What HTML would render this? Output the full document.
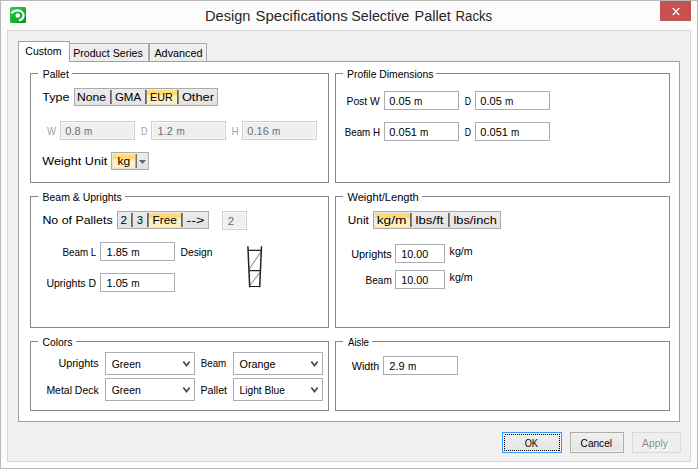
<!DOCTYPE html>
<html><head><meta charset="utf-8"><title>Design Specifications Selective Pallet Racks</title>
<style>html,body{margin:0;padding:0;background:#fcfcfc;}body{width:698px;height:469px;overflow:hidden;}svg{display:block;font-family:"Liberation Sans", sans-serif;}rect,line{shape-rendering:crispEdges;}</style></head><body>
<svg width="698" height="469" viewBox="0 0 698 469">
<defs>
<linearGradient id="gIcon" x1="0" y1="0" x2="1" y2="1"><stop offset="0" stop-color="#2ad24c"/><stop offset="1" stop-color="#07921f"/></linearGradient>
<linearGradient id="gBtn" x1="0" y1="0" x2="0" y2="1"><stop offset="0" stop-color="#f0f0f0"/><stop offset="1" stop-color="#e4e4e4"/></linearGradient>
<linearGradient id="gGrp" x1="0" y1="0" x2="0" y2="1"><stop offset="0" stop-color="#ececec"/><stop offset="1" stop-color="#e2e2e2"/></linearGradient>
<linearGradient id="gSel" x1="0" y1="0" x2="0" y2="1"><stop offset="0" stop-color="#ffe394"/><stop offset="0.12" stop-color="#ffdb72"/><stop offset="0.30" stop-color="#ffd660"/><stop offset="0.38" stop-color="#ffe9a6"/><stop offset="0.62" stop-color="#fff2c8"/><stop offset="1" stop-color="#ffedb2"/></linearGradient>
</defs>
<rect x="0" y="0" width="698" height="469" fill="#fcfcfc" />
<rect x="0.5" y="0.5" width="697" height="468" fill="none" stroke="#bababa" />
<rect x="7.5" y="30.5" width="683" height="431" fill="#f0f0f0" stroke="#d6d6d6" />
<rect x="10" y="7" width="16" height="16" rx="1.5" fill="url(#gIcon)" style="shape-rendering:auto"/>
<path d="M12,12.5 C14,10.8 16,10.3 18.2,10.4 C21.5,10.7 23.7,13 23.5,15.8 C23.3,18.4 21.5,19.6 19.6,20.2" fill="none" stroke="#fff" stroke-width="2.2" stroke-linecap="round"/>
<circle cx="17.8" cy="15.5" r="2.3" fill="#fff"/>
<text x="205.10000000000002" y="20.7" font-size="15" fill="#262626" textLength="45.3" lengthAdjust="spacingAndGlyphs" >Design</text>
<text x="255.60000000000002" y="20.7" font-size="15" fill="#262626" textLength="92.1" lengthAdjust="spacingAndGlyphs" >Specifications</text>
<text x="351.2" y="20.7" font-size="15" fill="#262626" textLength="58.1" lengthAdjust="spacingAndGlyphs" >Selective</text>
<text x="414.6" y="20.7" font-size="15" fill="#262626" textLength="36.2" lengthAdjust="spacingAndGlyphs" >Pallet</text>
<text x="455.6" y="20.7" font-size="15" fill="#262626" textLength="36.5" lengthAdjust="spacingAndGlyphs" >Racks</text>
<rect x="660" y="1" width="31" height="20" fill="#c75050" />
<path d="M672,8 L673.8,8 L680,15 L678.2,15 Z" fill="#fff"/><path d="M680,8 L678.2,8 L672,15 L673.8,15 Z" fill="#fff"/>
<rect x="69.5" y="43.5" width="79" height="18" fill="#f5f5f5" stroke="#a6a6a6" />
<rect x="71" y="45" width="76" height="16" fill="#ededed" />
<rect x="149.5" y="43.5" width="57" height="18" fill="#f5f5f5" stroke="#a6a6a6" />
<rect x="151" y="45" width="54" height="16" fill="#ededed" />
<rect x="18.5" y="61.5" width="661" height="360" fill="#fff" stroke="#a0a0a0" />
<rect x="18.5" y="41.5" width="51" height="20" fill="#fff" stroke="#a0a0a0" />
<rect x="19" y="61" width="50" height="1" fill="#fff" />
<text x="25.3" y="55" font-size="11.5" fill="#000" textLength="36.2" lengthAdjust="spacingAndGlyphs" >Custom</text>
<text x="73.2" y="57" font-size="11.5" fill="#000" textLength="69.6" lengthAdjust="spacingAndGlyphs" >Product Series</text>
<text x="154.4" y="57" font-size="11.5" fill="#000" textLength="48.2" lengthAdjust="spacingAndGlyphs" >Advanced</text>
<rect x="30.5" y="73.5" width="298" height="109" fill="none" stroke="#85878f" />
<rect x="38" y="73" width="34" height="1" fill="#fff" />
<text x="42.8" y="78" font-size="11.5" fill="#000" textLength="26.0" lengthAdjust="spacingAndGlyphs" >Pallet</text>
<rect x="335.5" y="73.5" width="334" height="109" fill="none" stroke="#85878f" />
<rect x="343" y="73" width="93" height="1" fill="#fff" />
<text x="347" y="78" font-size="11.5" fill="#000" textLength="86.5" lengthAdjust="spacingAndGlyphs" >Profile Dimensions</text>
<rect x="30.5" y="196.5" width="298" height="131" fill="none" stroke="#85878f" />
<rect x="38" y="196" width="87" height="1" fill="#fff" />
<text x="42.5" y="201" font-size="11.5" fill="#000" textLength="79.25" lengthAdjust="spacingAndGlyphs" >Beam &amp; Uprights</text>
<rect x="335.5" y="196.5" width="334" height="131" fill="none" stroke="#85878f" />
<rect x="343" y="196" width="79" height="1" fill="#fff" />
<text x="347.4" y="201" font-size="11.5" fill="#000" textLength="71.4" lengthAdjust="spacingAndGlyphs" >Weight/Length</text>
<rect x="30.5" y="341.5" width="298" height="69" fill="none" stroke="#85878f" />
<rect x="38" y="341" width="38" height="1" fill="#fff" />
<text x="42.5" y="346" font-size="11.5" fill="#000" textLength="30.0" lengthAdjust="spacingAndGlyphs" >Colors</text>
<rect x="335.5" y="341.5" width="334" height="69" fill="none" stroke="#85878f" />
<rect x="343" y="341" width="29" height="1" fill="#fff" />
<text x="348" y="346" font-size="11.5" fill="#000" textLength="21" lengthAdjust="spacingAndGlyphs" >Aisle</text>
<text x="42.3" y="101" font-size="11.7" fill="#000" textLength="27.2" lengthAdjust="spacingAndGlyphs" >Type</text>
<rect x="74.5" y="88.5" width="143" height="17" fill="url(#gGrp)" stroke="#ababab" />
<rect x="147" y="90" width="30" height="14" fill="url(#gSel)" />
<rect x="110" y="90" width="1.75" height="14" fill="#666" style="shape-rendering:auto"/>
<rect x="145" y="90" width="1.75" height="14" fill="#666" style="shape-rendering:auto"/>
<rect x="177" y="90" width="1.75" height="14" fill="#666" style="shape-rendering:auto"/>
<text x="77.1" y="101" font-size="11.7" fill="#000" textLength="29.0" lengthAdjust="spacingAndGlyphs" >None</text>
<text x="114.9" y="101" font-size="11.7" fill="#000" textLength="26.2" lengthAdjust="spacingAndGlyphs" >GMA</text>
<text x="150.1" y="101" font-size="11.7" fill="#000" textLength="22.8" lengthAdjust="spacingAndGlyphs" >EUR</text>
<text x="181.9" y="101" font-size="11.7" fill="#000" textLength="32.1" lengthAdjust="spacingAndGlyphs" >Other</text>
<text x="47" y="135" font-size="11.5" fill="#a3a3ad" textLength="9" lengthAdjust="spacingAndGlyphs" >W</text>
<rect x="60.5" y="121.5" width="74" height="18" fill="#f8f8f8" stroke="#cfcfcf" />
<rect x="62" y="123" width="71" height="15" fill="#efefef" />
<text x="65.3" y="135" font-size="11.5" fill="#6d6d6d" textLength="15.38" lengthAdjust="spacingAndGlyphs" >0.8</text>
<text x="84.1" y="135" font-size="11.5" fill="#6d6d6d" textLength="8.3" lengthAdjust="spacingAndGlyphs" >m</text>
<text x="141" y="135" font-size="11.5" fill="#a3a3ad" textLength="6.5" lengthAdjust="spacingAndGlyphs" >D</text>
<rect x="151.5" y="121.5" width="74" height="18" fill="#f8f8f8" stroke="#cfcfcf" />
<rect x="153" y="123" width="71" height="15" fill="#efefef" />
<text x="157.60000000000002" y="135" font-size="11.5" fill="#6d6d6d" textLength="15.38" lengthAdjust="spacingAndGlyphs" >1.2</text>
<text x="176.4" y="135" font-size="11.5" fill="#6d6d6d" textLength="8.3" lengthAdjust="spacingAndGlyphs" >m</text>
<text x="231.5" y="135" font-size="11.5" fill="#a3a3ad" textLength="7.1" lengthAdjust="spacingAndGlyphs" >H</text>
<rect x="242.5" y="121.5" width="74" height="18" fill="#f8f8f8" stroke="#cfcfcf" />
<rect x="244" y="123" width="71" height="15" fill="#efefef" />
<text x="247.3" y="135" font-size="11.5" fill="#6d6d6d" textLength="21.52" lengthAdjust="spacingAndGlyphs" >0.16</text>
<text x="272.1" y="135" font-size="11.5" fill="#6d6d6d" textLength="8.3" lengthAdjust="spacingAndGlyphs" >m</text>
<text x="42.3" y="165" font-size="11.7" fill="#000" textLength="64.9" lengthAdjust="spacingAndGlyphs" >Weight Unit</text>
<rect x="111.5" y="152.5" width="37" height="17" fill="url(#gGrp)" stroke="#ababab" />
<rect x="113" y="154" width="22" height="14" fill="url(#gSel)" />
<rect x="135.5" y="154" width="1.5" height="14" fill="#6e6e6e" style="shape-rendering:auto"/>
<path d="M139,160 L146,160 L142.5,164 Z" fill="#666"/>
<text x="117.6" y="165" font-size="11.7" fill="#000" textLength="12.7" lengthAdjust="spacingAndGlyphs" >kg</text>
<text x="346.5" y="105" font-size="11.5" fill="#000" textLength="33.25" lengthAdjust="spacingAndGlyphs" >Post W</text>
<rect x="384.5" y="91.5" width="74" height="18" fill="#fff" stroke="#abadb3" />
<text x="389.3" y="105" font-size="11.5" fill="#000" textLength="21.52" lengthAdjust="spacingAndGlyphs" >0.05</text>
<text x="414.1" y="105" font-size="11.5" fill="#000" textLength="8.3" lengthAdjust="spacingAndGlyphs" >m</text>
<text x="464.7" y="105" font-size="11.5" fill="#000" textLength="6.3" lengthAdjust="spacingAndGlyphs" >D</text>
<rect x="475.5" y="91.5" width="74" height="18" fill="#fff" stroke="#abadb3" />
<text x="480.3" y="105" font-size="11.5" fill="#000" textLength="21.52" lengthAdjust="spacingAndGlyphs" >0.05</text>
<text x="505.1" y="105" font-size="11.5" fill="#000" textLength="8.3" lengthAdjust="spacingAndGlyphs" >m</text>
<text x="344.75" y="136" font-size="11.5" fill="#000" textLength="35.25" lengthAdjust="spacingAndGlyphs" >Beam H</text>
<rect x="384.5" y="122.5" width="74" height="18" fill="#fff" stroke="#abadb3" />
<text x="389.3" y="136" font-size="11.5" fill="#000" textLength="27.68" lengthAdjust="spacingAndGlyphs" >0.051</text>
<text x="420.1" y="136" font-size="11.5" fill="#000" textLength="8.3" lengthAdjust="spacingAndGlyphs" >m</text>
<text x="464.7" y="136" font-size="11.5" fill="#000" textLength="6.3" lengthAdjust="spacingAndGlyphs" >D</text>
<rect x="475.5" y="122.5" width="74" height="18" fill="#fff" stroke="#abadb3" />
<text x="480.3" y="136" font-size="11.5" fill="#000" textLength="27.68" lengthAdjust="spacingAndGlyphs" >0.051</text>
<text x="511.1" y="136" font-size="11.5" fill="#000" textLength="8.3" lengthAdjust="spacingAndGlyphs" >m</text>
<text x="42.4" y="224" font-size="11.7" fill="#000" textLength="70.2" lengthAdjust="spacingAndGlyphs" >No of Pallets</text>
<rect x="117.5" y="211.5" width="91" height="17" fill="url(#gGrp)" stroke="#ababab" />
<rect x="149" y="213" width="32" height="14" fill="url(#gSel)" />
<rect x="131" y="213" width="1.75" height="14" fill="#666" style="shape-rendering:auto"/>
<rect x="147" y="213" width="1.75" height="14" fill="#666" style="shape-rendering:auto"/>
<rect x="181" y="213" width="1.75" height="14" fill="#666" style="shape-rendering:auto"/>
<text x="120.5" y="224" font-size="11.7" fill="#000" textLength="6.5" lengthAdjust="spacingAndGlyphs" >2</text>
<text x="137" y="224" font-size="11.7" fill="#000" textLength="6" lengthAdjust="spacingAndGlyphs" >3</text>
<text x="152.5" y="224" font-size="11.7" fill="#000" textLength="24.5" lengthAdjust="spacingAndGlyphs" >Free</text>
<text x="186.3" y="224" font-size="11.7" fill="#000" textLength="18.2" lengthAdjust="spacingAndGlyphs" >--&gt;</text>
<rect x="222.5" y="211.5" width="24" height="18" fill="#f8f8f8" stroke="#cfcfcf" />
<rect x="224" y="213" width="21" height="15" fill="#efefef" />
<text x="227.8" y="225" font-size="11.5" fill="#6d6d6d" >2</text>
<text x="62.5" y="256" font-size="11.5" fill="#000" textLength="33.7" lengthAdjust="spacingAndGlyphs" >Beam L</text>
<rect x="100.5" y="242.5" width="74" height="18" fill="#fff" stroke="#abadb3" />
<text x="106.5" y="256" font-size="11.5" fill="#000" textLength="21.53" lengthAdjust="spacingAndGlyphs" >1.85</text>
<text x="131.3" y="256" font-size="11.5" fill="#000" textLength="8.3" lengthAdjust="spacingAndGlyphs" >m</text>
<text x="180.5" y="256" font-size="11.5" fill="#000" textLength="32.0" lengthAdjust="spacingAndGlyphs" >Design</text>
<text x="46.4" y="287" font-size="11.5" fill="#000" textLength="49.7" lengthAdjust="spacingAndGlyphs" >Uprights D</text>
<rect x="100.5" y="273.5" width="74" height="18" fill="#fff" stroke="#abadb3" />
<text x="106.5" y="287" font-size="11.5" fill="#000" textLength="21.53" lengthAdjust="spacingAndGlyphs" >1.05</text>
<text x="131.3" y="287" font-size="11.5" fill="#000" textLength="8.3" lengthAdjust="spacingAndGlyphs" >m</text>
<g stroke="#222" fill="none" stroke-linecap="butt"><path d="M247.9,246.3 L249.7,287.3 M261.5,246.3 L259.7,287.3" stroke-width="1.5"/><path d="M248,250.3 L261.3,250.3 M249,270.6 L260.4,270.6 M249.6,286.5 L259.8,286.5" stroke-width="1.2"/><path d="M261,251.5 L249,269.5 M260.3,272 L249.7,285.6" stroke-width="0.65" stroke="#333"/></g>
<text x="347.8" y="224" font-size="11.7" fill="#000" textLength="21.0" lengthAdjust="spacingAndGlyphs" >Unit</text>
<rect x="373.5" y="211.5" width="127" height="17" fill="url(#gGrp)" stroke="#ababab" />
<rect x="375" y="213" width="35" height="14" fill="url(#gSel)" />
<rect x="410" y="213" width="1.75" height="14" fill="#666" style="shape-rendering:auto"/>
<rect x="448" y="213" width="1.75" height="14" fill="#666" style="shape-rendering:auto"/>
<text x="376.75" y="224" font-size="11.7" fill="#000" textLength="29.75" lengthAdjust="spacingAndGlyphs" >kg/m</text>
<text x="415.5" y="224" font-size="11.7" fill="#000" textLength="28.0" lengthAdjust="spacingAndGlyphs" >lbs/ft</text>
<text x="453.5" y="224" font-size="11.7" fill="#000" textLength="43.25" lengthAdjust="spacingAndGlyphs" >lbs/inch</text>
<text x="351.2" y="258" font-size="11.5" fill="#000" textLength="40.6" lengthAdjust="spacingAndGlyphs" >Uprights</text>
<rect x="395.5" y="244.5" width="49" height="18" fill="#fff" stroke="#abadb3" />
<text x="401.3" y="258" font-size="11.5" fill="#000" textLength="27.0" lengthAdjust="spacingAndGlyphs" >10.00</text>
<text x="449.6" y="255" font-size="11.5" fill="#000" textLength="23.0" lengthAdjust="spacingAndGlyphs" >kg/m</text>
<text x="365.6" y="284" font-size="11.5" fill="#000" textLength="26.2" lengthAdjust="spacingAndGlyphs" >Beam</text>
<rect x="395.5" y="270.5" width="49" height="18" fill="#fff" stroke="#abadb3" />
<text x="401.3" y="284" font-size="11.5" fill="#000" textLength="27.0" lengthAdjust="spacingAndGlyphs" >10.00</text>
<text x="449.6" y="281" font-size="11.5" fill="#000" textLength="23.0" lengthAdjust="spacingAndGlyphs" >kg/m</text>
<text x="58.4" y="367" font-size="11.5" fill="#000" textLength="40.3" lengthAdjust="spacingAndGlyphs" >Uprights</text>
<rect x="105.5" y="352.5" width="89" height="22" fill="#fff" stroke="#abadb3" />
<text x="111.75" y="368" font-size="11.5" fill="#000" textLength="29.0" lengthAdjust="spacingAndGlyphs" >Green</text>
<path d="M183.3,361.5 L186.5,365.6 L189.7,361.5" fill="none" stroke="#4a4a4a" stroke-width="1.7"/>
<text x="200.75" y="367" font-size="11.5" fill="#000" textLength="25.5" lengthAdjust="spacingAndGlyphs" >Beam</text>
<rect x="233.5" y="352.5" width="89" height="22" fill="#fff" stroke="#abadb3" />
<text x="239.5" y="368" font-size="11.5" fill="#000" textLength="36.0" lengthAdjust="spacingAndGlyphs" >Orange</text>
<path d="M311.3,361.5 L314.5,365.6 L317.7,361.5" fill="none" stroke="#4a4a4a" stroke-width="1.7"/>
<text x="46.4" y="394" font-size="11.5" fill="#000" textLength="52.3" lengthAdjust="spacingAndGlyphs" >Metal Deck</text>
<rect x="105.5" y="378.5" width="89" height="22" fill="#fff" stroke="#abadb3" />
<text x="111.75" y="394" font-size="11.5" fill="#000" textLength="29.0" lengthAdjust="spacingAndGlyphs" >Green</text>
<path d="M183.3,387.5 L186.5,391.6 L189.7,387.5" fill="none" stroke="#4a4a4a" stroke-width="1.7"/>
<text x="200.5" y="394" font-size="11.5" fill="#000" textLength="26.5" lengthAdjust="spacingAndGlyphs" >Pallet</text>
<rect x="233.5" y="378.5" width="89" height="22" fill="#fff" stroke="#abadb3" />
<text x="239.5" y="394" font-size="11.5" fill="#000" textLength="45.5" lengthAdjust="spacingAndGlyphs" >Light Blue</text>
<path d="M311.3,387.5 L314.5,391.6 L317.7,387.5" fill="none" stroke="#4a4a4a" stroke-width="1.7"/>
<text x="351.75" y="370" font-size="11.5" fill="#000" textLength="27.5" lengthAdjust="spacingAndGlyphs" >Width</text>
<rect x="383.5" y="356.5" width="74" height="18" fill="#fff" stroke="#abadb3" />
<text x="389.3" y="370" font-size="11.5" fill="#000" textLength="15.38" lengthAdjust="spacingAndGlyphs" >2.9</text>
<text x="408.1" y="370" font-size="11.5" fill="#000" textLength="8.3" lengthAdjust="spacingAndGlyphs" >m</text>
<rect x="502.5" y="432.5" width="59" height="20" fill="url(#gBtn)" stroke="#3399ff" />
<rect x="503.5" y="433.5" width="57" height="18" fill="none" stroke="#f5f5f5" />
<rect x="504.5" y="434.5" width="55" height="16" fill="none" stroke="#000" stroke-dasharray="1 1" shape-rendering="crispEdges"/>
<text x="524.7" y="447" font-size="11.5" fill="#000" textLength="13.3" lengthAdjust="spacingAndGlyphs" >OK</text>
<rect x="570.5" y="432.5" width="53" height="20" fill="url(#gBtn)" stroke="#acacac" />
<rect x="571.5" y="433.5" width="51" height="18" fill="none" stroke="#f2f2f2" />
<text x="580.6" y="447" font-size="11.5" fill="#000" textLength="31.4" lengthAdjust="spacingAndGlyphs" >Cancel</text>
<rect x="632.5" y="432.5" width="48" height="20" fill="#efefef" stroke="#d9d9d9" />
<text x="643" y="448" font-size="11.5" fill="#ffffff" textLength="26" lengthAdjust="spacingAndGlyphs" >Apply</text>
<text x="642" y="447" font-size="11.5" fill="#8a8a8a" textLength="26" lengthAdjust="spacingAndGlyphs" >Apply</text>
</svg></body></html>
